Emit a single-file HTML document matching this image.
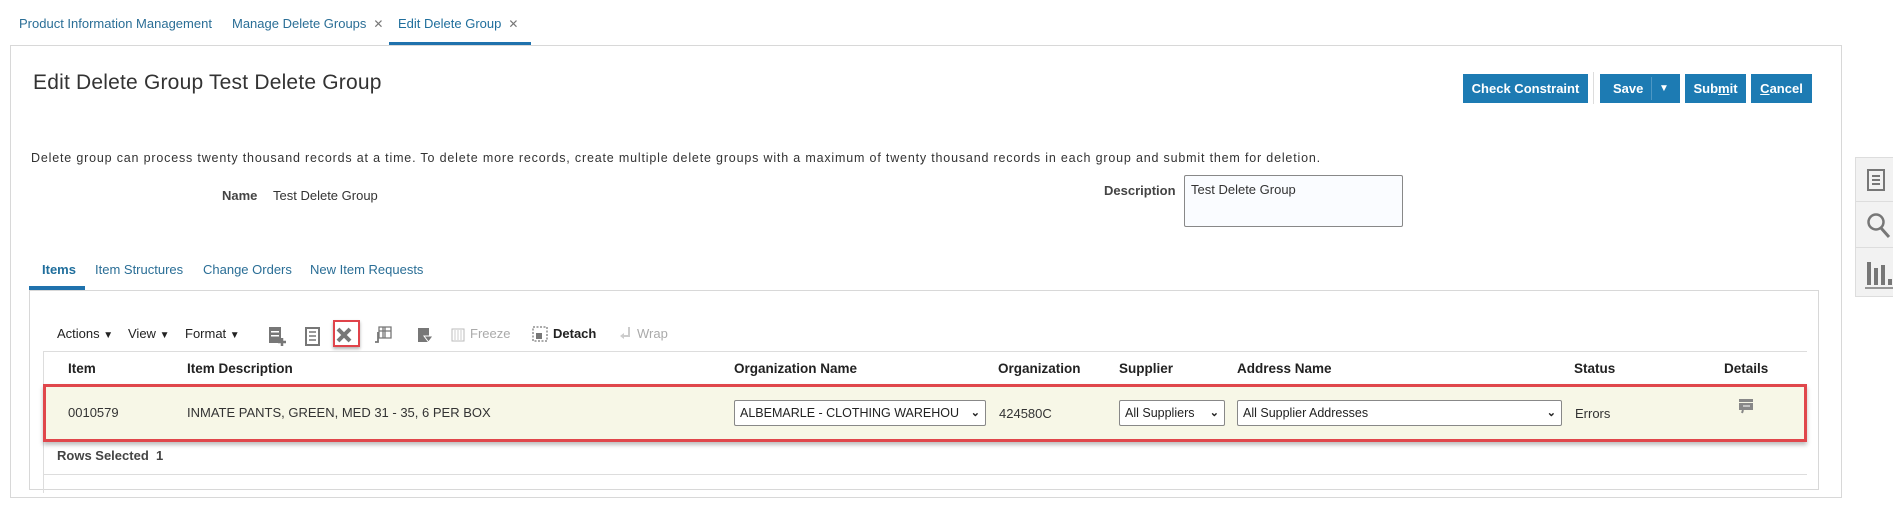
<!DOCTYPE html>
<html><head><meta charset="utf-8">
<style>
*{box-sizing:border-box;margin:0;padding:0}
body{width:1893px;height:513px;background:#fff;font-family:"Liberation Sans",Arial,sans-serif;color:#333;position:relative;overflow:hidden;font-size:13px}
.a{position:absolute;white-space:nowrap}
.tab{color:#2a6e96;font-size:13px;top:16px}
.x{color:#777;font-size:12px;margin-left:7px}
.btn{position:absolute;top:74px;height:29px;background:#1d7bb3;color:#fff;font-weight:bold;font-size:13px;line-height:29px;text-align:center}
.hd{font-weight:bold;font-size:13.5px;color:#222;top:361px}
.sel{position:absolute;top:400px;height:26px;border:1px solid #888;border-radius:2px;background:#fff;font-size:12.5px;line-height:24px;padding-left:5px;color:#222}
.sel i{position:absolute;right:5px;top:0;font-style:normal;font-size:11px;font-weight:bold}
</style></head><body>
<div class="a tab" style="left:19px">Product Information Management</div>
<div class="a tab" style="left:232px">Manage Delete Groups<span class="x">✕</span></div>
<div class="a tab" style="left:398px;color:#1f6e9c">Edit Delete Group<span class="x">✕</span></div>
<div class="a" style="left:389px;top:42px;width:142px;height:3px;background:#1f72ad"></div>

<div class="a" style="left:10px;top:45px;width:1832px;height:453px;border:1px solid #d8d8d8"></div>
<div class="a" style="left:33px;top:71px;font-size:21px;color:#333;letter-spacing:0.2px">Edit Delete Group Test Delete Group</div>

<div class="btn" style="left:1463px;width:125px">Check Constraint</div>
<div class="a" style="left:1593px;top:72px;width:1px;height:32px;background:#ddd"></div>
<div class="btn" style="left:1600px;width:80px;text-align:left;padding-left:13px">Save<span style="position:absolute;left:51px;top:3px;width:1px;height:23px;background:#4d97c4"></span><span style="position:absolute;left:59px;top:0;font-size:10px">▼</span></div>
<div class="btn" style="left:1685px;width:61px">Sub<u>m</u>it</div>
<div class="btn" style="left:1751px;width:61px"><u>C</u>ancel</div>

<div class="a" style="left:31px;top:151px;font-size:12.5px;color:#333;letter-spacing:0.82px">Delete group can process twenty thousand records at a time. To delete more records, create multiple delete groups with a maximum of twenty thousand records in each group and submit them for deletion.</div>
<div class="a" style="left:222px;top:188px;font-weight:bold;color:#444">Name</div>
<div class="a" style="left:273px;top:188px">Test Delete Group</div>
<div class="a" style="left:1104px;top:183px;font-weight:bold;color:#444">Description</div>
<div class="a" style="left:1184px;top:175px;width:219px;height:52px;border:1px solid #888;border-radius:2px;background:#fafcff;padding:6px 6px;font-size:13px">Test Delete Group</div>

<div class="a" style="left:42px;top:262px;color:#1f6e9c;font-weight:bold">Items</div>
<div class="a" style="left:95px;top:262px;color:#2a6e96">Item Structures</div>
<div class="a" style="left:203px;top:262px;color:#2a6e96">Change Orders</div>
<div class="a" style="left:310px;top:262px;color:#2a6e96">New Item Requests</div>
<div class="a" style="left:29px;top:290px;width:1790px;height:200px;border:1px solid #d8d8d8"></div>
<div class="a" style="left:29px;top:286px;width:56px;height:4px;background:#1f72ad"></div>

<div class="a" style="left:57px;top:326px;color:#222">Actions <span style="font-size:10px">▼</span></div>
<div class="a" style="left:128px;top:326px;color:#222">View <span style="font-size:10px">▼</span></div>
<div class="a" style="left:185px;top:326px;color:#222">Format <span style="font-size:10px">▼</span></div>
<svg class="a" style="left:266px;top:324px" width="175" height="26">
 <rect x="3" y="3" width="12" height="16" fill="#777"/><rect x="5" y="7" width="8" height="1.5" fill="#fff"/><rect x="5" y="11" width="8" height="1.5" fill="#fff"/><path d="M16 14v8M12 18h8" stroke="#777" stroke-width="2.5"/>
 <rect x="40" y="4" width="13" height="17" fill="none" stroke="#777" stroke-width="2"/><path d="M43 8h7M43 12h7M43 16h7" stroke="#777" stroke-width="1.5"/>
 <path d="M72 5l12 12M84 5l-12 12" stroke="#777" stroke-width="4"/>
 <path d="M113 3h12v11h-12zM113 7h12M119 3v11M117 3v11" stroke="#777" stroke-width="1.3" fill="none"/><path d="M112 8v10h-3" stroke="#777" stroke-width="1.8" fill="none"/>
 <rect x="152" y="4" width="11" height="14" fill="#777"/><path d="M158 12h9l-4.5 6z" fill="#777" stroke="#fff"/>
</svg>
<div class="a" style="left:333px;top:320px;width:27px;height:27px;border:2px solid #e0434a;box-shadow:0 2px 3px rgba(0,0,0,.3)"></div>
<svg class="a" style="left:451px;top:328px" width="14" height="14"><rect x="1" y="1" width="12" height="12" fill="none" stroke="#bbb"/><path d="M4 2v10M7 2v10M10 2v10" stroke="#ccc"/></svg>
<div class="a" style="left:470px;top:326px;color:#aaa">Freeze</div>
<svg class="a" style="left:532px;top:326px" width="16" height="16"><rect x="1" y="1" width="14" height="14" fill="none" stroke="#555" stroke-dasharray="2 1.5"/><rect x="4" y="7" width="6" height="6" fill="#777"/></svg>
<div class="a" style="left:553px;top:326px;font-weight:bold;color:#222">Detach</div>
<svg class="a" style="left:619px;top:326px" width="14" height="16"><path d="M10 1v9H4" stroke="#ccc" stroke-width="2" fill="none"/><path d="M1 10l4-3v6z" fill="#ccc"/></svg>
<div class="a" style="left:637px;top:326px;color:#aaa">Wrap</div>

<div class="a" style="left:43px;top:351px;width:1764px;height:1px;background:#ddd"></div>
<div class="a" style="left:43px;top:351px;width:1px;height:142px;background:#ddd"></div>
<div class="a hd" style="left:68px">Item</div>
<div class="a hd" style="left:187px">Item Description</div>
<div class="a hd" style="left:734px">Organization Name</div>
<div class="a hd" style="left:998px">Organization</div>
<div class="a hd" style="left:1119px">Supplier</div>
<div class="a hd" style="left:1237px">Address Name</div>
<div class="a hd" style="left:1574px">Status</div>
<div class="a hd" style="left:1724px">Details</div>

<div class="a" style="left:43px;top:384px;width:1764px;height:58px;background:#f7f7e7;border:3px solid #e0474c;box-shadow:0 3px 4px rgba(0,0,0,.25)"></div>
<div class="a" style="left:68px;top:405px">0010579</div>
<div class="a" style="left:187px;top:405px">INMATE PANTS, GREEN, MED 31 - 35, 6 PER BOX</div>
<div class="sel" style="left:734px;width:252px">ALBEMARLE - CLOTHING WAREHOU<i>⌄</i></div>
<div class="a" style="left:999px;top:406px">424580C</div>
<div class="sel" style="left:1119px;width:106px">All Suppliers<i>⌄</i></div>
<div class="sel" style="left:1237px;width:325px">All Supplier Addresses<i>⌄</i></div>
<div class="a" style="left:1575px;top:406px">Errors</div>
<svg class="a" style="left:1738px;top:398px" width="16" height="16"><rect x="1" y="1" width="14" height="3" fill="#888"/><rect x="1" y="5" width="14" height="7" fill="#888"/><path d="M5 8h7" stroke="#fff"/><path d="M5 12l-1 3" stroke="#888" stroke-width="2"/></svg>

<div class="a" style="left:57px;top:448px;font-weight:bold;color:#444">Rows Selected&nbsp;&nbsp;1</div>
<div class="a" style="left:43px;top:474px;width:1764px;height:1px;background:#ddd"></div>

<div class="a" style="left:1855px;top:157px;width:40px;height:140px;background:#f2f2f2;border:1px solid #ddd"></div>
<div class="a" style="left:1856px;top:201px;width:38px;height:1px;background:#ddd"></div>
<div class="a" style="left:1856px;top:247px;width:38px;height:1px;background:#ddd"></div>
<svg class="a" style="left:1866px;top:168px" width="20" height="24"><rect x="2" y="2" width="16" height="20" fill="none" stroke="#777" stroke-width="2"/><path d="M6 8h8M6 12h8M6 16h8" stroke="#777" stroke-width="2"/></svg>
<svg class="a" style="left:1866px;top:212px" width="27" height="28"><circle cx="10" cy="10" r="7.5" fill="none" stroke="#777" stroke-width="2.5"/><path d="M15 16l8 9" stroke="#777" stroke-width="3"/></svg>
<svg class="a" style="left:1864px;top:258px" width="29" height="32"><path d="M5 4v23M12 10v17M19 7v20M26 21v6" stroke="#777" stroke-width="4"/><path d="M1 30h28" stroke="#777" stroke-width="1.5"/></svg>
</body></html>
